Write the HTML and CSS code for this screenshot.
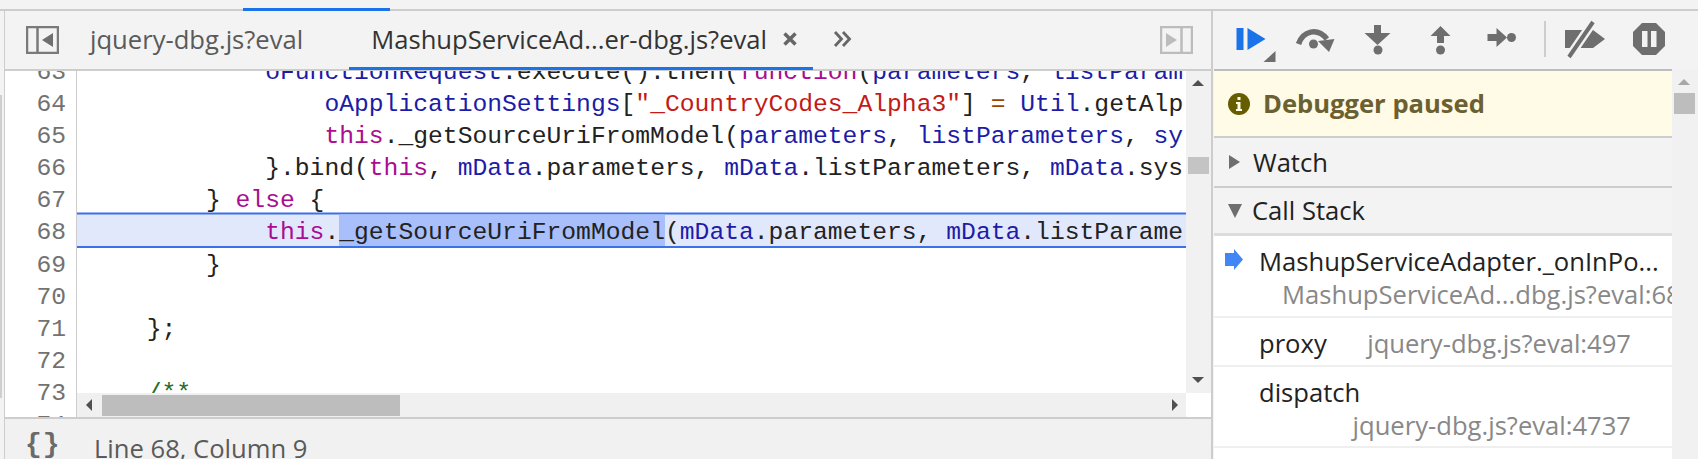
FILE: index.html
```html
<!DOCTYPE html>
<html lang="en">
<head>
<meta charset="utf-8">
<title>Sources</title>
<link rel="stylesheet" href="styles.css">
</head>
<body>
<div class="strip"><div class="strip-active"></div></div>
<div class="panes">
  <div class="edge"><div class="edge-thumb"></div></div>
  <div class="main">
    <div class="tabbar">
      <svg class="toggle" viewBox="0 0 33 28"><path class="tg" d="M1 1h31v26H1zM11.500 1v26"/><path class="tf" d="M27 7v14L16 14z"/></svg>
      <div class="tab">jquery-dbg.js?eval</div>
      <div class="tab tab-active">MashupServiceAd...er-dbg.js?eval<svg class="close" viewBox="0 0 14 14"><path d="M1.500 1.500l11 11M12.500 1.500l-11 11"/></svg></div>
      <svg class="more" viewBox="0 0 20 16"><path d="M2 1l6.500 7L2 15M10 1l6.500 7L10 15"/></svg>
      <svg class="toggle toggle-r" viewBox="0 0 33 28"><path class="tg" d="M1 1h31v26H1zM21.500 1v26"/><path class="tf" d="M6 7v14l11-7z"/></svg>
    </div>
    <div class="editor">
      <div class="code">
        <div class="gutter">
          <div>63</div><div>64</div><div>65</div><div>66</div><div>67</div><div>68</div><div>69</div><div>70</div><div>71</div><div>72</div><div>73</div><div>74</div>
        </div>
        <div class="lines">
          <div class="row">            <i>oFunctionRequest</i>.execute().then(<b>function</b>(<i>parameters</i>, <i>listParam</i></div>
          <div class="row">                <i>oApplicationSettings</i>[<u>"_CountryCodes_Alpha3"</u>] <s>=</s> <i>Util</i>.getAlp</div>
          <div class="row">                <b>this</b>._getSourceUriFromModel(<i>parameters</i>, <i>listParameters</i>, <i>sy</i></div>
          <div class="row">            }.bind(<b>this</b>, <i>mData</i>.parameters, <i>mData</i>.listParameters, <i>mData</i>.sys</div>
          <div class="row">        } <b>else</b> {</div>
          <div class="row row-hit">            <b>this</b>.<span class="sel">_getSourceUriFromModel</span>(<i>mData</i>.parameters, <i>mData</i>.listParame</div>
          <div class="row">        }</div>
          <div class="row"> </div>
          <div class="row">    };</div>
          <div class="row"> </div>
          <div class="row">    <em>/**</em></div>
          <div class="row"> </div>
        </div>
      </div>
      <div class="vscroll">
        <span class="arr arr-up"></span>
        <span class="vthumb"></span>
        <span class="arr arr-down"></span>
      </div>
      <div class="hscroll">
        <span class="arr arr-left"></span>
        <span class="hthumb"></span>
        <span class="arr arr-right"></span>
      </div>
    </div>
    <div class="status"><span class="braces">{}</span><span class="pos">Line 68, Column 9</span></div>
  </div>
  <div class="divider"></div>
  <div class="side">
    <div class="tools">
      <svg class="btn" viewBox="0 0 63 58"><path class="blue" d="M16.500 17h7v22h-7zM27.500 17l18 11-18 11z"/><path class="gray" d="M55.500 40v11h-12z"/></svg>
      <svg class="btn" viewBox="0 0 63 58"><path class="gstroke" d="M15.500 33C20 20 34 16 44 28"/><path class="gray" d="M51.500 28L46 41 35 30z"/><circle class="gray" cx="30.500" cy="33" r="4.500"/></svg>
      <svg class="btn" viewBox="0 0 63 58"><path class="gray" d="M28 14h7v8h9.500L31.500 34l-13-12H28z"/><circle class="gray" cx="32" cy="39" r="4.500"/></svg>
      <svg class="btn" viewBox="0 0 63 58"><path class="gray" d="M31.500 15l10 10H35v7h-7v-7h-6.500z"/><circle class="gray" cx="31.500" cy="39" r="4.500"/></svg>
      <svg class="btn" viewBox="0 0 63 58"><path class="gray" d="M15.500 23h9v-6l10.500 9.500L24.500 36v-6h-9z"/><circle class="gray" cx="39.500" cy="26.500" r="4.500"/></svg>
      <span class="sep"></span>
      <svg class="btn2" viewBox="0 0 58 58"><path class="gray" d="M9 19h28l12 9-12 9H9z"/><path class="gap" d="M37 11L13 46"/><path class="slash" d="M37 11L13 46"/></svg>
      <svg class="btn2 btn-pause" viewBox="0 0 58 58"><path class="gray" d="M22 12h14l9 9v14l-9 9H22l-9-9V21z"/><path class="white" d="M22 20h5.500v16H22zM31 20h5.500v16H31z"/></svg>
    </div>
    <div class="side-body">
      <div class="side-list">
        <div class="paused">
          <svg class="info" viewBox="0 0 24 24"><circle cx="12" cy="12" r="11"/><path d="M10.500 5h3v3h-3zM9 10h4.500v7H15v2H9v-2h1.500v-5H9z"/></svg>
          <span>Debugger paused</span>
        </div>
        <div class="head head-watch"><span class="tri-r"></span>Watch</div>
        <div class="head head-stack"><span class="tri-d"></span>Call Stack</div>
        <div class="frame frame-top">
          <svg class="cur" viewBox="0 0 18 21"><path d="M0 4h9V0l9 10.500L9 21v-4H0z"/></svg>
          <div class="fn">MashupServiceAdapter._onInPo...</div>
          <div class="loc loc-first">MashupServiceAd...dbg.js?eval:68</div>
        </div>
        <div class="frame frame-one">
          <div class="fn">proxy</div>
          <div class="loc">jquery-dbg.js?eval:497</div>
        </div>
        <div class="frame frame-two">
          <div class="fn">dispatch</div>
          <div class="loc loc-end">jquery-dbg.js?eval:4737</div>
        </div>
      </div>
      <div class="side-scroll">
        <span class="arr arr-up side-up"></span>
        <span class="side-thumb"></span>
      </div>
    </div>
  </div>
</div>
</body>
</html>
```
FILE: styles.css
```css
* { box-sizing: border-box; }
html, body { margin: 0; padding: 0; }
body {
  width: 1698px;
  height: 459px;
  overflow: hidden;
  background: #f3f3f3;
  font-family: "Open Sans", "Noto Sans", sans-serif;
  font-size: 25.600px;
  color: #222;
}
.strip {
  height: 11px;
  border-bottom: 2px solid #cdcdcd;
  display: flex;
  align-items: flex-end;
}
.strip-active {
  margin-left: 243px;
  margin-bottom: -2px;
  width: 147px;
  height: 3px;
  background: #1a73e8;
}
.panes { display: flex; height: 448px; }
.edge {
  width: 5px;
  border-right: 1.500px solid #cdcdcd;
  padding-top: 84px;
}
.edge-thumb { width: 2px; height: 303px; background: #cfcfcf; }
.main { width: 1206px; display: flex; flex-direction: column; }
.tabbar {
  height: 60px;
  border-bottom: 2px solid #cdcdcd;
  display: flex;
  align-items: flex-start;
  background: #f3f3f3;
}
.toggle { width: 33px; height: 28px; margin: 15px 0 0 21px; flex: none; }
.toggle .tg { fill: none; stroke: #7a7a7a; stroke-width: 2.500; }
.toggle .tf { fill: #6e6e6e; }
.toggle-r { margin: 15px 18px 0 auto; }
.toggle-r .tg { stroke: #bcbcbc; }
.toggle-r .tf { fill: #bcbcbc; }
.tab {
  height: 59px;
  padding: 9px 0 0;
  margin-left: 31px;
  line-height: 40px;
  color: #5a5a5a;
  white-space: nowrap;
  display: flex;
}
.tab-active {
  margin-left: 46px;
  padding: 9px 0 0 22px;
  width: 464px;
  border-bottom: 3px solid #1a73e8;
  color: #333;
}
.close { width: 14px; height: 14px; margin: 12px 0 0 16px; flex: none; }
.close path { fill: none; stroke: #666; stroke-width: 3.500; }
.more { width: 20px; height: 16px; margin: 20px 0 0 20px; flex: none; }
.more path { fill: none; stroke: #666; stroke-width: 2.800; }
.editor {
  position: relative;
  height: 346px;
  background: #fff;
  display: flex;
  overflow: hidden;
}
.code {
  width: 1181px;
  height: 346px;
  overflow: hidden;
  display: flex;
  font-family: "Liberation Mono", "DejaVu Sans Mono", monospace;
  font-size: 24.680px;
  line-height: 32.100px;
}
.gutter {
  width: 72px;
  flex: none;
  margin-top: -15px;
  height: 362px;
  padding-right: 10px;
  text-align: right;
  color: #727272;
  border-right: 1.500px solid #cdcdcd;
}
.lines { flex: 1; min-width: 0; margin-top: -15px; }
.row {
  height: 32.100px;
  padding-left: 10.500px;
  white-space: pre;
  color: #222;
}
.row i { font-style: normal; color: #1c1ca8; }
.row b { font-weight: normal; color: #aa0d91; }
.row u { text-decoration: none; color: #c41a16; }
.row s { text-decoration: none; color: #994500; }
.row em { font-style: normal; color: #236e25; }
.row-hit {
  position: relative;
  background: linear-gradient(#e2e8fc 0 calc(100% - 2.600px), #3a71e8 calc(100% - 2.600px) calc(100% - 0.600px), #fff calc(100% - 0.600px));
  box-shadow: 0 -1.500px 0 #e2e8fc, 0 -3.500px 0 #3a71e8;
}
.sel {
  display: inline-block;
  height: 29.500px;
  line-height: 32.100px;
  vertical-align: top;
  background: #a8bffb;
  box-shadow: 0 -1.500px 0 #a8bffb;
}
.vscroll {
  width: 25px;
  height: 322px;
  background: #f1f1f1;
  flex: none;
  position: relative;
}
.vthumb {
  position: absolute;
  left: 2px;
  top: 86px;
  width: 21px;
  height: 17px;
  background: #c4c4c4;
}
.arr { position: absolute; width: 0; height: 0; border-style: solid; border-color: transparent; }
.arr-up { left: 6px; top: 9px; border-width: 0 6px 6px; border-bottom-color: #505050; }
.arr-down { left: 6px; bottom: 10px; border-width: 6px 6px 0; border-top-color: #505050; }
.hscroll {
  position: absolute;
  left: 72px;
  right: 25px;
  bottom: 0;
  height: 24px;
  background: #f0f0f0;
}
.hthumb {
  position: absolute;
  left: 25px;
  top: 2px;
  width: 298px;
  height: 21px;
  background: #bdbdbd;
}
.arr-left { left: 9px; top: 6px; border-width: 6px 6px 6px 0; border-right-color: #505050; }
.arr-right { right: 8px; top: 6px; border-width: 6px 0 6px 6px; border-left-color: #505050; }
.status {
  height: 42px;
  border-top: 2px solid #cdcdcd;
  background: #f1f1f1;
  display: flex;
  align-items: flex-start;
  overflow: hidden;
}
.braces {
  margin: 6px 0 0 20px;
  width: 69px;
  font-family: "Liberation Mono", monospace;
  font-weight: bold;
  font-size: 28px;
  line-height: 40px;
  letter-spacing: 1px;
  color: #6a6a6a;
}
.pos { margin-top: 10px; line-height: 40px; color: #5a5a5a; }
.divider { width: 3px; background: linear-gradient(90deg, #cdcdcd 0 2px, #f3f3f3 2px); flex: none; }
.side { flex: 1; display: flex; flex-direction: column; min-width: 0; }
.tools { height: 58px; display: flex; align-items: flex-start; padding-left: 5.500px; }
.btn { width: 63px; height: 58px; flex: none; }
.btn2 { width: 58px; height: 58px; flex: none; }
.btn-pause { margin-left: 6px; }
.blue { fill: #1a73e8; }
.gray { fill: #6e6e6e; }
.white { fill: #f3f3f3; }
.gstroke { fill: none; stroke: #6e6e6e; stroke-width: 5.500; }
.gap { stroke: #f3f3f3; stroke-width: 9; fill: none; }
.slash { stroke: #6e6e6e; stroke-width: 4; fill: none; }
.sep { width: 2px; height: 36px; margin: 10px 10.500px 0 9px; background: #cdcdcd; flex: none; }
.side-body { flex: 1; display: flex; min-height: 0; }
.side-list { width: 458px; flex: none; overflow: hidden; background: #fff; }
.side-scroll { flex: 1; position: relative; background: #f1f1f1; }
.side-up { left: 6px; top: 10px; border-bottom-color: #a8a8a8; }
.side-thumb {
  position: absolute;
  left: 2px;
  top: 24px;
  width: 21px;
  height: 21px;
  background: #bdbdbd;
}
.paused {
  height: 69px;
  border-top: 2px solid #bdbdbd;
  border-bottom: 2px solid #cdcdcd;
  background: #fffbe6;
  display: flex;
  align-items: center;
  padding-left: 13px;
  font-weight: bold;
  color: #6b6030;
}
.info { width: 24px; height: 24px; margin-right: 12px; flex: none; }
.info circle { fill: #665c00; }
.info path { fill: #fffbe6; }
.head {
  background: #f3f3f3;
  display: flex;
  align-items: center;
  padding-left: 14px;
  color: #222;
}
.head-watch { height: 50px; border-bottom: 2px solid #cdcdcd; }
.head-stack { height: 48px; border-bottom: 3px solid #dcdcdc; }
.tri-r {
  width: 0; height: 0;
  border-style: solid;
  border-width: 7px 0 7px 11px;
  border-color: transparent transparent transparent #6e6e6e;
  margin: 0 13px 0 1px;
}
.tri-d {
  width: 0; height: 0;
  border-style: solid;
  border-width: 14px 7px 0;
  border-color: #6e6e6e transparent transparent;
  margin-right: 10px;
}
.frame {
  position: relative;
  padding-left: 45px;
  background: #fff;
  border-bottom: 2px solid #efefef;
  overflow: hidden;
  white-space: nowrap;
}
.frame-top { height: 82px; }
.frame-one { height: 49px; display: flex; justify-content: space-between; padding-right: 41px; }
.frame-two { height: 81px; }
.fn { color: #222; line-height: 40px; padding-top: 6px; }
.loc { color: #888; line-height: 40px; padding-top: 6px; }
.loc-first { padding-left: 23px; padding-top: 0; margin-top: -7px; }
.loc-end { padding: 0 41px 0 0; margin-top: -7px; text-align: right; }
.cur { position: absolute; left: 11px; top: 13px; width: 18px; height: 21px; fill: #4285f4; }
```
